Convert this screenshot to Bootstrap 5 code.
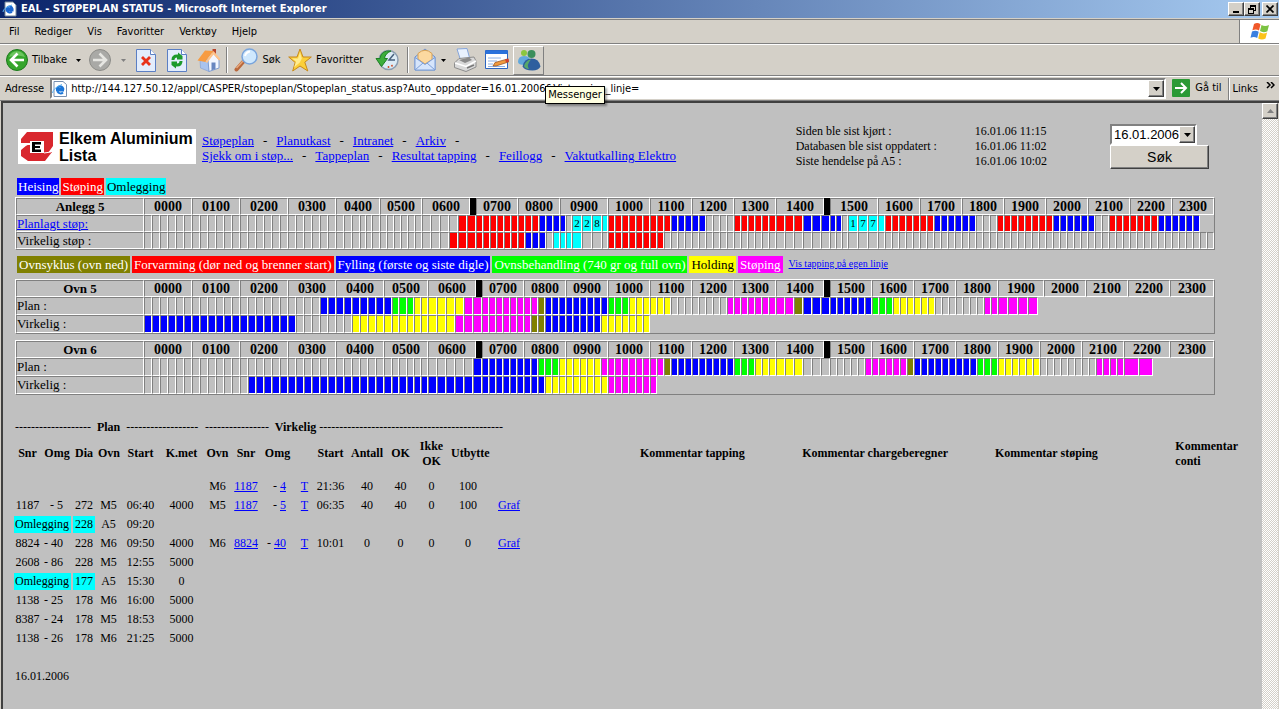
<!DOCTYPE html>
<html lang="no">
<head>
<meta charset="utf-8">
<meta name="viewport" content="width=device-width, initial-scale=1">
<title>EAL - STØPEPLAN STATUS</title>
<link href="https://cdn.jsdelivr.net/npm/bootstrap@5.3.0/dist/css/bootstrap.min.css" rel="stylesheet">
<style>
:root{--face:#d4d0c8;--shade:#808080;--page:#c0c0c0}
body{background:var(--face);font-family:"DejaVu Sans Condensed","Liberation Sans",sans-serif;font-size:11px;line-height:14px;color:#000}
button{font:inherit;color:inherit;background:none;border:0;padding:0}
.titlebar{height:18px;background:linear-gradient(90deg,#0a246a,#a6caf0);color:#fff;font-weight:bold;padding:0 1px 0 2px}
.raised{background:var(--face);border:1px solid;border-color:#fff #404040 #404040 #fff;box-shadow:inset -1px -1px 0 var(--shade)}
.winbtn{width:16px;height:14px;display:flex;align-items:center;justify-content:center}
.winbtn:last-child{margin-left:2px}
.menubar{height:25px;margin-top:1px;border-top:1px solid var(--shade);border-bottom:1px solid var(--shade)}
.menubar nav{gap:15px;padding-left:9px}
.menubar a{color:#000;text-decoration:none}
.flagbox{width:40px;background:#fff;border-left:1px solid var(--shade)}
.toolbar{height:32px;border-top:1px solid #fff;border-bottom:1px solid var(--shade);padding-left:6px;display:grid;align-items:center;
 grid-template-columns:64px 17px 26px 20px 26px 36px 28px 8px 53px 84px 37px 6px 28px 9px 34px 30px 33px;justify-items:center}
.toolbar button{display:flex;align-items:center;justify-content:center;gap:4px;white-space:nowrap}
.toolbar .start{justify-self:start}
.toolbar .vline{width:2px;height:26px;border-left:1px solid var(--shade);border-right:1px solid #fff}
.toolbar .hot{width:31px;height:29px;border:1px solid;border-color:#fff var(--shade) var(--shade) #fff}
.addressbar{height:25px;border-top:1px solid #fff;border-bottom:1px solid var(--shade);padding:1px 0 0 5px}
.urlbox{background:#fff;border:2px solid;border-color:var(--shade) #fff #fff var(--shade);height:21px;margin-left:6px;position:relative}
.urlbox input{border:0;outline:0;padding:0 0 0 4px;font-size:11px;height:16px;background:transparent}
.dropbtn{width:16px;height:17px;display:flex;align-items:center;justify-content:center;flex:none}
.gobox{padding:0 6px;gap:5px;display:flex;align-items:center}
.addressbar .gobox{padding:0 6px}
.linksbox{border-left:1px solid var(--shade);padding:0 4px 0 4px;gap:8px;box-shadow:inset 1px 0 0 #fff}
.tip{position:absolute;left:493px;top:6px;background:#ffffe1;border:1px solid #000;padding:1px 2px;box-shadow:2px 2px 2px rgba(0,0,0,.35);z-index:5;white-space:nowrap;line-height:14px}
.viewport{background:var(--page);border-top:2px solid #404040;border-left:2px solid #404040;margin-left:1px;font-family:"Liberation Serif",serif;font-size:13px;line-height:15px}
.viewport a{color:#00f;text-decoration:underline}
.scroller{width:17px;flex:none;background:repeating-conic-gradient(#fff 0 25%,var(--face) 0 50%) 0 0/2px 2px;border-right:1px solid var(--face)}
.scroller button{width:16px;height:16px;display:flex;align-items:center;justify-content:center}
.doc{padding:21px 0 20px 12px;min-width:0}
.band{margin-right:47px}
.logo{width:178px;height:35px;background:#fff;font-family:"Liberation Sans",sans-serif;font-weight:bold;font-size:16px;line-height:17px;padding-left:3px;gap:6px;margin:5px 0 0 3px}
.sitenav{margin:9px 0 0 6px}
.sitenav div{display:flex;gap:9px}
.stamps{margin-right:63px;font-size:12px}
.stamps td{padding:0}
.stamps td:first-child{width:179px}
.datepick{width:99px;margin-right:6px}
.datesel{width:87px;height:21px;border:2px solid;border-color:var(--shade) #fff #fff var(--shade);background:#fff}
.datesel select{appearance:none;border:0;background:#fff;padding:0 0 0 2px;width:67px;outline:0;font-family:"Liberation Sans",sans-serif;font-size:13px}
.searchbtn{width:99px;height:24px;font-family:"Liberation Sans",sans-serif;font-size:14px}
.keys{gap:2px;margin:9px 0 2px 2px}
.keys span{padding:1px;height:17px}
.keys.wide{margin:6px 0 6px 2px}
.keys.wide span{padding:1px 2px}
.keys .tapping{font-size:10px}
.bl{background:#00f;color:#fff}.rd{background:#f00;color:#fff}.cy{background:#0ff;color:#000}.ol{background:olive;color:#fff}
.gn{background:#0f0;color:#fff}.ye{background:#ff0;color:#000}.mg{background:#f0f;color:#fff}.bk{background:#000}
.gantt{display:block;border:1px solid;border-color:#fff var(--shade) var(--shade) #fff}
.gantt thead,.gantt tbody{display:block}
.gantt tr{display:flex}
.gantt th,.gantt td{flex:none;border:1px solid;border-color:var(--shade) #fff #fff var(--shade);height:17px;line-height:15px;padding:0;white-space:nowrap;overflow:hidden}
.gantt thead th{font-size:14px;text-align:center}
.gantt thead th:first-child{font-size:13px}
.gantt tbody th{font-weight:normal}
.gantt td{font-size:11px;text-align:center}
.gantt.tall tbody th,.gantt.tall tbody td{height:18px;line-height:16px}
.gantt th.bk{border-color:#000}
.gantt.tall + .gantt.tall{margin-top:6px}
.runs{table-layout:fixed;width:100%;border-collapse:separate;border-spacing:2px 2px;margin:22px 0 20px -3px;font-size:12px}
.runs td,.runs th{padding:0 1px;height:17px;white-space:nowrap}
.runs td{text-align:center}
.runs td.r{text-align:right;padding-right:8px}
.runs td.l,.runs th.l{text-align:left}
.runs td.graf{text-align:left;padding-left:10px}
.runs .heads th{height:38px;padding-bottom:7px;text-align:center}
.runs .heads th.l{text-align:left}
.runs .wraps{white-space:normal}
.dash{font-weight:normal}
.stampdate{font-size:12px}
</style>
</head>
<body class="min-vh-100 d-flex flex-column">
<header>
<div class="titlebar d-flex align-items-center">
 <svg width="15" height="16" viewBox="0 0 15 16"><path d="M3 1h8l3 3v11H3z" fill="#fff" stroke="#789"/><path d="M11.500 9.500H4.500a3 3 0 1 1 6-2H5M10 11a3.500 3.500 0 0 1-5-1" fill="none" stroke="#1b66d0" stroke-width="1.800"/><path d="M1 11Q1 7 10 4" fill="none" stroke="#5ab0f0"/></svg>
 <span class="ms-1 flex-grow-1">EAL - STØPEPLAN STATUS - Microsoft Internet Explorer</span>
 <button class="winbtn raised" aria-label="Minimer"><svg width="8" height="8"><path d="M1 6h6v2H1z"/></svg></button>
 <button class="winbtn raised" aria-label="Gjenopprett"><svg width="10" height="9"><path d="M3 0h6v6H7V5h1V2H4v1H3zM1 3h6v6H1zM2 5v3h4V5z" fill-rule="evenodd"/></svg></button>
 <button class="winbtn raised" aria-label="Lukk"><svg width="8" height="8"><path d="M.5.5l7 7M7.500.5l-7 7" stroke="#000" stroke-width="1.700"/></svg></button>
</div>
<div class="menubar d-flex">
 <nav class="d-flex align-items-center flex-grow-1"><a href="#">Fil</a><a href="#">Rediger</a><a href="#">Vis</a><a href="#">Favoritter</a><a href="#">Verktøy</a><a href="#">Hjelp</a></nav>
 <div class="flagbox d-flex align-items-center justify-content-center">
  <svg width="20" height="19" viewBox="0 0 20 19"><path d="M4 2q3.500-2 6.500.3L9 8.500Q6 6.500 2.400 8.300z" fill="#f0582a"/><path d="M11.500 3q3.500 2 7.500 0l-1.600 6.200q-4 2-7.400-.2z" fill="#7cc242"/><path d="M2 9.600q3.500-2 6.700.2L7.200 16Q4 14 .5 15.800z" fill="#3a7fe0"/><path d="M9.700 10.300q3.500 2.200 7.400.2l-1.600 6.100q-3.800 2-7.300-.2z" fill="#fbc21a"/></svg>
 </div>
</div>
<div class="toolbar">
 <button class="start"><svg width="22" height="22" viewBox="0 0 22 22"><circle cx="11" cy="11" r="10.500" fill="#35a52c" stroke="#1c7a1c"/><path d="M3 8a8.500 8.500 0 0 1 16 0q-8-3-16 0z" fill="#8fdb80" opacity=".6"/><path d="M11.500 4.500L5 11l6.500 6.500M5.500 11H18" fill="none" stroke="#fff" stroke-width="2.600"/></svg>Tilbake</button>
 <svg width="5" height="3"><path d="M0 0h5L2.500 3z"/></svg>
 <button aria-label="Frem"><svg width="22" height="22" viewBox="0 0 22 22"><circle cx="11" cy="11" r="10.500" fill="#a9a9a6" stroke="#8c8c88"/><path d="M10.500 4.500L17 11l-6.500 6.500M16.500 11H4" fill="none" stroke="#e6e6e2" stroke-width="2.600"/></svg></button>
 <svg width="5" height="3"><path d="M0 0h5L2.500 3z" fill="#808080"/></svg>
 <button aria-label="Stopp"><svg width="20" height="23" viewBox="0 0 20 23"><path d="M.5.5h14l5 5v17H.5z" fill="#e3edfc" stroke="#5b7fc4"/><path d="M14.500.5v5h5" fill="#fff" stroke="#5b7fc4"/><path d="M6 8l8 8M14 8l-8 8" stroke="#e8321a" stroke-width="2.800"/></svg></button>
 <button aria-label="Oppdater"><svg width="20" height="23" viewBox="0 0 20 23"><path d="M.5.5h14l5 5v17H.5z" fill="#e3edfc" stroke="#5b7fc4"/><path d="M14.500.5v5h5" fill="#fff" stroke="#5b7fc4"/><path d="M4.500 11q0-6 6.500-5.500V3.500L15.500 7v3.500H10V8.500Q7.500 8.500 7.500 11zM15.500 12q0 6-6.500 5.500v2L4.500 16v-3.500H10v2q2.500 0 2.500-2.500z" fill="#1c9a2c"/></svg></button>
 <button aria-label="Hjem"><svg width="24" height="24" viewBox="0 0 24 24"><path d="M15.500 1h3.500v7h-3.500z" fill="#b8442c"/><path d="M3 12l.5 8L12 23.500V11z" fill="#a9c3ef" stroke="#7f9cd0" stroke-width=".6"/><path d="M11 12l5.500-7 5.500 7v8L12 23.500z" fill="#f2f6ff" stroke="#7f9cd0"/><path d="M.5 12.500L8 2.500l8.500.5L9.500 12l-1 2z" fill="#f79b41"/><path d="M16.500 3L23.500 11l-1.500 1.500-5.500-6-6.500 8.500-1.500-1z" fill="#ffc38a"/><path d="M14.500 14.500h4v6.500l-4 1.300z" fill="#6886c0"/></svg></button>
 <span class="vline"></span>
 <button><svg width="24" height="24" viewBox="0 0 24 24"><path d="M9 14l-6.500 7.500" stroke="#b9683c" stroke-width="4" stroke-linecap="round"/><path d="M9 13l-6.500 7" stroke="#e6a679" stroke-width="1.500"/><circle cx="15.500" cy="8.500" r="7.500" fill="#cfe8fd" stroke="#7aa5dc" stroke-width="1.500"/><path d="M11 8q1-4 5-4.500" stroke="#fff" stroke-width="2" fill="none"/></svg>Søk</button>
 <button class="start ps-1"><svg width="24" height="24" viewBox="0 0 24 24"><path d="M12 1l3 8h8.300l-6.500 5.200 3 8.800-7.800-5-7.300 5 2.500-8.500L.7 9H9z" fill="#fcd03a" stroke="#c8891a"/><path d="M12 4l1.800 6.500-2 4-5.800 5 2-6L4 10.500h6z" fill="#fff3a8" opacity=".8"/></svg>Favoritter</button>
 <button aria-label="Logg"><svg width="24" height="24" viewBox="0 0 24 24"><circle cx="13.500" cy="12" r="9.500" fill="#dcebf5" stroke="#8b9db0" stroke-width="1.500"/><path d="M19 6l-5 6h6" stroke="#48627e" stroke-width="1.500" fill="none"/><path d="M13.500 20v-2M17.500 18.500l-1-1.500" stroke="#d2502c" stroke-width="1.500"/><path d="M16 3Q6 2 5 10.500H1l5.500 8 6-8H9.500Q10 5.500 16 3z" fill="#3cae3c" stroke="#1d7f24"/></svg></button>
 <span class="vline"></span>
 <button aria-label="E-post"><svg width="22" height="24" viewBox="0 0 22 24"><path d="M1 9L11 1l10 8v13H1z" fill="#b8d2f5" stroke="#6a8fce"/><path d="M4 5.500Q11-1 18 5.500v6L11 16l-7-5z" fill="#fcd9a0" stroke="#d9a150"/><path d="M1 9.500l10 7 10-7V22H1z" fill="#d6e5fb" stroke="#7d9fd8"/><path d="M1 22l8-7M21 22l-8-7" stroke="#7d9fd8"/></svg></button>
 <svg width="5" height="3"><path d="M0 0h5L2.500 3z"/></svg>
 <button aria-label="Skriv ut"><svg width="24" height="24" viewBox="0 0 24 24"><path d="M4 1l10-.5 3 11-9 2z" fill="#e8f1fe" stroke="#86a5da"/><path d="M1.500 15L6 10.500 21 9l2 4v6l-10 4.500-11.500-4z" fill="#d9d9d9" stroke="#8c8c8c"/><path d="M2 15l11 3.500L23 13" fill="none" stroke="#fff" stroke-width="1.500"/><path d="M6 12l10-2.500 3 2.500-7 3z" fill="#8a8a8a"/><path d="M14 20l7-3" stroke="#777" stroke-width="1.500"/></svg></button>
 <button aria-label="Rediger"><svg width="24" height="20" viewBox="0 0 24 20"><path d="M.5.5h22v18H.5z" fill="#fff" stroke="#2c65c0"/><path d="M.5.5h22V4H.5z" fill="#2a72dc"/><path d="M3 8h13M3 11h9M3 14h5M3 16.500h17" stroke="#8cb0e6"/><path d="M8 16l2-3.500L22.500 9l1 3-12.500 4z" fill="#f19a3e" stroke="#8c4a1c" stroke-width=".7"/><path d="M20 9.500l3.500-1 .5 3-3 1z" fill="#d2402c"/></svg></button>
 <button class="hot" aria-label="Messenger"><svg width="24" height="22" viewBox="0 0 24 22"><circle cx="7" cy="4" r="3" fill="#8cc63f"/><path d="M1 13q0-6 6-6t6 5l-5 4q-7 0-7-3z" fill="#62a8dc"/><circle cx="14.500" cy="5" r="4" fill="#3c8f5c"/><path d="M5.500 17.500q1.500-8 9-8t9 8q-2 4-8 4-8 0-10-4z" fill="#2e5f9e"/><path d="M7 17q2-6 7-6.500Q9 16 12 20q-4-.5-5-3z" fill="#57a86a"/></svg></button>
</div>
<div class="addressbar d-flex align-items-start">
 <label for="url" class="mt-1">Adresse</label>
 <div class="urlbox d-flex align-items-center flex-grow-1">
  <svg width="15" height="16" viewBox="0 0 15 16"><path d="M2 .5h9l3.500 3v12H2z" fill="#fff" stroke="#7890b0"/><path d="M12 9.500H5a3.200 3.200 0 1 1 6.200-2H5M11 11.500a3.500 3.500 0 0 1-5.500-1" fill="none" stroke="#1b76d8" stroke-width="2"/><path d="M.5 12Q1 7 10 3.500" fill="none" stroke="#5ab0f0"/></svg>
  <input id="url" type="text" class="flex-grow-1" value="http://144.127.50.12/appl/CASPER/stopeplan/Stopeplan_status.asp?Auto_oppdater=16.01.2006&amp;Vistapping_linje=">
  <button class="dropbtn raised" aria-label="Vis adresser"><svg width="7" height="4"><path d="M0 0h7L3.500 4z"/></svg></button>
  <div class="tip" role="tooltip">Messenger</div>
 </div>
 <button class="gobox"><svg width="18" height="20" viewBox="0 0 18 18"><rect width="18" height="18" rx="1" fill="#2b9a35"/><path d="M3 9h11M9 4l5 5-5 5" fill="none" stroke="#fff" stroke-width="2"/></svg>Gå til</button>
 <div class="linksbox d-flex align-self-stretch align-items-center"><span>Links</span><svg width="9" height="7" class="mb-2"><path d="M1 0l3 3-3 3M5 0l3 3-3 3" fill="none" stroke="#000" stroke-width="1.500"/></svg></div>
</div>
</header>
<main class="viewport d-flex flex-grow-1">
<div class="doc flex-grow-1">
 <div class="band d-flex align-items-start">
  <div class="logo d-flex align-items-center">
   <svg width="32" height="30" viewBox="0 0 32 30"><path d="M6 0h26v14l-5 7h-4V9H9v2H0V7z" fill="#d9272e"/><path d="M0 18l6-5h3v8h14v-1h8l-7 9H7l-7-5z" fill="#d9272e"/><path d="M9 9h14v12H9z" fill="#fff"/><path d="M1 14l8-2M23 21l7-1" stroke="#fff"/><path d="M11 10h9v2.500h-6v1.500h5v2h-5v1.500h6V20h-9z"/></svg>
   <span>Elkem Aluminium<br>Lista</span>
  </div>
  <nav class="sitenav flex-grow-1">
   <div><a href="#">Støpeplan</a>-<a href="#">Planutkast</a>-<a href="#">Intranet</a>-<a href="#">Arkiv</a>-</div>
   <div><a href="#">Sjekk om i støp...</a>-<a href="#">Tappeplan</a>-<a href="#">Resultat tapping</a>-<a href="#">Feillogg</a>-<a href="#">Vaktutkalling Elektro</a></div>
  </nav>
  <table class="stamps"><tbody>
   <tr><td>Siden ble sist kjørt :</td><td>16.01.06 11:15</td></tr>
   <tr><td>Databasen ble sist oppdatert :</td><td>16.01.06 11:02</td></tr>
   <tr><td>Siste hendelse på A5 :</td><td>16.01.06 10:02</td></tr>
  </tbody></table>
  <form class="datepick" onsubmit="return false">
   <div class="datesel d-flex"><select aria-label="Dato"><option>16.01.2006</option></select><span class="dropbtn raised"><svg width="7" height="4"><path d="M0 0h7L3.500 4z"/></svg></span></div>
   <button class="searchbtn raised">Søk</button>
  </form>
 </div>
 <div class="keys d-flex"><span class="bl">Heising</span><span class="rd">Støping</span><span class="cy">Omlegging</span></div>
 <div class="band"><table class="gantt" id="anlegg5"></table></div>
 <div class="keys wide d-flex"><span class="ol">Ovnsyklus (ovn ned)</span><span class="rd">Forvarming (dør ned og brenner start)</span><span class="bl">Fylling (første og siste digle)</span><span class="gn">Ovnsbehandling (740 gr og full ovn)</span><span class="ye">Holding</span><span class="mg">Støping</span><a href="#" class="ms-1 tapping">Vis tapping på egen linje</a></div>
 <div class="band"><table class="gantt tall" id="ovn5"></table><table class="gantt tall" id="ovn6"></table></div>
 <table class="runs">
  <colgroup><col style="width:27px"><col style="width:28px"><col style="width:22px"><col style="width:23px"><col style="width:37px"><col style="width:41px"><col style="width:27px"><col style="width:26px"><col style="width:33px"><col style="width:17px"><col style="width:31px"><col style="width:38px"><col style="width:25px"><col style="width:33px"><col style="width:36px"><col style="width:112px"><col style="width:15%"><col style="width:15%"><col style="width:17%"><col></colgroup>
  <thead>
   <tr><th colspan="6" class="l"><span class="dash">-------------------</span>&nbsp; Plan &nbsp;<span class="dash">------------------</span></th><th colspan="14" class="l"><span class="dash">----------------</span>&nbsp; Virkelig <span class="dash">----------------------------------------------</span></th></tr>
   <tr class="heads"><th>Snr</th><th>Omg</th><th>Dia</th><th>Ovn</th><th>Start</th><th>K.met</th><th>Ovn</th><th>Snr</th><th>Omg</th><th></th><th>Start</th><th>Antall</th><th>OK</th><th class="wraps">Ikke OK</th><th>Utbytte</th><th></th><th>Kommentar tapping</th><th>Kommentar chargeberegner</th><th class="pe-5">Kommentar støping</th><th class="wraps l">Kommentar conti</th></tr>
  </thead>
  <tbody id="rows"></tbody>
 </table>
 <p class="mb-0 stampdate">16.01.2006</p>
</div>
<div class="scroller"><button class="raised" aria-label="Rull opp"><svg width="7" height="4"><path d="M0 4h7L3.500 0z" fill="#808080"/></svg></button></div>
</main>
<script src="https://cdn.jsdelivr.net/npm/bootstrap@5.3.0/dist/js/bootstrap.bundle.min.js"></script>
<script>
const kinds={b:'bl',r:'rd',c:'cy',o:'ol',g:'gn',y:'ye',m:'mg','-':''};
const LABEL=128, TOTAL=1198;
const rep=(n,w)=>Array(n).fill(w);
const pct=w=>'width:'+(w/TOTAL*100)+'%';
// heads: one width per hour, negative for a shift marker; rows: runs of a kind letter and a slot count
function gantt(id,title,heads,slots,rows){
  let h=0;
  const head=heads.map(w=>w<0?`<th class="bk" style="${pct(-w)}"></th>`:`<th scope="col" style="${pct(w)}">${String(h++).padStart(2,'0')}00</th>`).join('');
  const body=rows.map(([label,runs,marks={}])=>{
    let i=0,out='';
    for(const [,k,n] of runs.matchAll(/([a-z-])(\d+)/g))
      for(let j=0;j<+n;j++,i++) out+=`<td class="${kinds[k]}" style="${pct(slots[i])}">${marks[i]||''}</td>`;
    return `<tr><th scope="row" style="${pct(LABEL)}">${label}</th>${out}</tr>`;
  }).join('');
  document.getElementById(id).innerHTML=`<thead><tr><th style="${pct(LABEL)}">${title}</th>${head}</tr></thead><tbody>${body}</tbody>`;
}
gantt('anlegg5','Anlegg 5',
 [48,48,48,48,44,42,48,-6,42,42,48,42,42,42,42,48,-6,48,42,42,42,42,42,42,42,42],
 [...rep(24,8),8,8,8,6,6,8,...rep(6,7),...rep(6,9),...rep(12,7),6,6,10,10,10,6,...rep(24,7),...rep(6,9),6,6,6,10,10,10,...rep(48,7)],
 [['<a href="#">Planlagt støp:</a>','-40r11b4-1c4r9b5-4r9b5-1c4r7b6-3r8b6-2r7b6',{56:'2',57:'2',58:'8',93:'1',94:'7',95:'7'}],
  ['Virkelig støp :','-39r10b3-1c4-3r8-76']]);
const oven=[...rep(30,8),8,7,8,7,7,7,...rep(6,9),...rep(42,7),...rep(6,9),...rep(24,7)];
gantt('ovn5','Ovn 5',
 [48,48,48,48,48,44,48,-6,42,42,42,42,42,42,42,48,-6,42,42,42,42,46,42,42,42,44],
 [...oven,10,10,10,10,6],
 [['Plan :','-22b9g3y6m10o1b9g3y6-8m9o1b9g3y6-7m6'],
  ['Virkelig :','b19-7y13m10o2b8y7']]);
gantt('ovn6','Ovn 6',
 [48,48,48,48,48,44,48,-6,42,42,42,42,42,42,42,48,-6,42,42,42,42,42,42,42,46,44],
 [...oven,...rep(18,7),15,14],
 [['Plan :','-41b9g3y6m9o1b9g3y6-8m6o1b9g3y6-8m4m2'],
  ['Virkelig :','-13b38y9m7']]);

const data=[
 [null,['M6','1187','4','21:36',40,40,0,100,'']],
 [['1187','5','272','M5','06:40','4000'],['M5','1187','5','06:35',40,40,0,100,'Graf']],
 [['Omlegging','','228','A5','09:20',''],null],
 [['8824','40','228','M6','09:50','4000'],['M6','8824','40','10:01',0,0,0,0,'Graf']],
 [['2608','86','228','M5','12:55','5000'],null],
 [['Omlegging','','177','A5','15:30','0'],null],
 [['1138','25','178','M6','16:00','5000'],null],
 [['8387','24','178','M5','18:53','5000'],null],
 [['1138','26','178','M6','21:25','5000'],null]];
const link=t=>t?`<a href="#">${t}</a>`:'';
document.getElementById('rows').innerHTML=data.map(([p,v])=>{
  let s='';
  if(!p) s+='<td colspan="6"></td>';
  else{
    s+=p[1]?`<td>${p[0]}</td><td class="r">- ${p[1]}</td><td>${p[2]}</td>`:`<td class="cy l" colspan="2">${p[0]}</td><td class="cy">${p[2]}</td>`;
    s+=`<td>${p[3]}</td><td>${p[4]}</td><td>${p[5]}</td>`;
  }
  if(v) s+=`<td>${v[0]}</td><td>${link(v[1])}</td><td class="r">- ${link(v[2])}</td><td>${link('T')}</td><td>${v[3]}</td><td>${v[4]}</td><td>${v[5]}</td><td>${v[6]}</td><td>${v[7]}</td><td class="graf">${link(v[8])}</td><td colspan="4"></td>`;
  else s+='<td colspan="14"></td>';
  return `<tr>${s}</tr>`;
}).join('');
</script>
</body>
</html>
